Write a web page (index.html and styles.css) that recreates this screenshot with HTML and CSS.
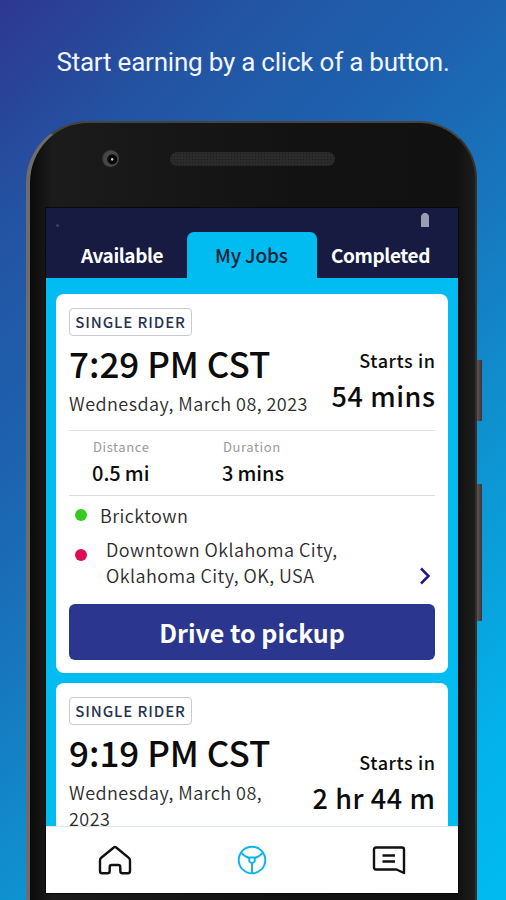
FILE: index.html
```html
<!DOCTYPE html>
<html lang="en">
<head>
    <meta charset="UTF-8">
    <meta name="viewport" content="width=device-width, initial-scale=1.0">
    <title>My Jobs</title>
    <link rel="stylesheet" href="styles.css">
</head>
<body>
    <h1>Start earning by a click of a button.</h1>

    <div class="phone">
        <span class="side-button power"></span>
        <span class="side-button volume"></span>
        <div class="bezel">
            <div class="camera"></div>
            <div class="speaker"></div>
        </div>

        <div class="screen">
            <header>
                <div class="status">
                    <span class="status-dot"></span>
                    <svg class="battery" width="10" height="14" viewBox="0 0 10 14"><path d="M3.500 0h3l2.500 2.500V14H1V2.500z" fill="#9a9cb0"/></svg>
                </div>
                <nav class="tabs">
                    <a class="tab">Available</a>
                    <a class="tab active">My Jobs</a>
                    <a class="tab">Completed</a>
                </nav>
            </header>

            <main>
                <section class="card">
                    <span class="badge">SINGLE RIDER</span>
                    <div class="summary">
                        <div class="when">
                            <h2>7:29 PM CST</h2>
                            <p class="date">Wednesday, March 08, 2023</p>
                        </div>
                        <div class="starts">
                            <p class="starts-label">Starts in</p>
                            <p class="starts-value">54 mins</p>
                        </div>
                    </div>
                    <div class="stats">
                        <div class="stat">
                            <p class="stat-label">Distance</p>
                            <p class="stat-value">0.5<span>mi</span></p>
                        </div>
                        <div class="stat">
                            <p class="stat-label">Duration</p>
                            <p class="stat-value">3<span>mins</span></p>
                        </div>
                    </div>
                    <div class="route">
                        <div class="stop">
                            <span class="dot green"></span>
                            <p>Bricktown</p>
                        </div>
                        <div class="stop dropoff">
                            <span class="dot red"></span>
                            <p>Downtown Oklahoma City,<br>Oklahoma City, OK, USA</p>
                            <svg class="chevron" width="12" height="18" viewBox="0 0 12 18"><path d="M2 1.500l7.500 7.500L2 16.500" fill="none" stroke="#1d1b86" stroke-width="2.500"/></svg>
                        </div>
                    </div>
                    <button>Drive to pickup</button>
                </section>

                <section class="card">
                    <span class="badge">SINGLE RIDER</span>
                    <div class="summary">
                        <div class="when">
                            <h2>9:19 PM CST</h2>
                            <p class="date">Wednesday, March 08,<br>2023</p>
                        </div>
                        <div class="starts late">
                            <p class="starts-label">Starts in</p>
                            <p class="starts-value">2 hr 44 m</p>
                        </div>
                    </div>
                </section>
            </main>

            <footer>
                <svg width="34" height="30" viewBox="0 0 34 30" fill="none" stroke="#111" stroke-width="2.400" stroke-linejoin="round">
                    <path d="M17 2Q16.300 2 15.500 2.700L3.200 12.800Q2 13.800 2 15.500V26Q2 28.300 4.300 28.300H9.500Q11.700 28.300 11.700 26V22Q11.700 20 13.700 20H20.300Q22.300 20 22.300 22V26Q22.300 28.300 24.500 28.300H29.700Q32 28.300 32 26V15.500Q32 13.800 30.800 12.800L18.500 2.700Q17.700 2 17 2Z"/>
                </svg>
                <svg width="30" height="30" viewBox="0 0 30 30" fill="none" stroke="#10b5ef" stroke-width="2">
                    <circle cx="15" cy="15" r="13.300"/>
                    <path d="M12.300 12.500h5.400v4l-2.700 1.800l-2.700-1.800z" stroke-linejoin="round"/>
                    <path d="M12.300 13Q7 11.500 4 7.500M17.700 13Q23 11.500 26 7.500M15 18V28.500"/>
                </svg>
                <svg width="34" height="30" viewBox="0 0 34 30" fill="none" stroke="#111" stroke-width="2.400" stroke-linejoin="round">
                    <path d="M4 2.500H30Q32 2.500 32 4.500V28L24.500 24.500H4Q2 24.500 2 22.500V4.500Q2 2.500 4 2.500ZM10.500 10.500H23M10.500 16.500H23"/>
                </svg>
            </footer>
        </div>
    </div>
</body>
</html>
```
FILE: styles.css
```css
* {
    box-sizing: border-box;
}
body {
    margin: 0;
    height: 900px;
    overflow: hidden;
    background: linear-gradient(136deg, #2e3791 0%, #2354a3 17%, #1d63b0 35%, #1777be 49%, #0f91d0 65%, #03b3eb 88%, #00bbf0 100%);
    font-family: "Noto Sans CJK SC", "Noto Sans", sans-serif;
    color: #0c0c0c;
}
h1, h2, p {
    margin: 0;
    font-weight: 400;
    white-space: nowrap;
}
h1 {
    height: 121px;
    padding-top: 46px;
    font-family: Roboto, sans-serif;
    font-size: 26px;
    line-height: 32px;
    letter-spacing: -0.22px;
    text-align: center;
    color: #f1f5ff;
}
.phone {
    position: relative;
    width: 451px;
    height: 779px;
    margin-left: 26px;
    padding: 0 16px;
    border: 2px solid #45443c;
    border-left: 4px solid #6e6d69;
    border-right-color: #34312a;
    border-bottom: none;
    border-radius: 62px 58px 0 0;
    background: linear-gradient(90deg, #0b0b0b, #1b1b1b 5%, #121212 60%, #111 96%, #1c1c1c);
}
.side-button {
    position: absolute;
    right: -7px;
    width: 5px;
    background: linear-gradient(90deg, #5d5257, #3e3336);
}
.power {
    top: 237px;
    height: 61px;
}
.volume {
    top: 361px;
    height: 137px;
}
.bezel {
    display: flex;
    height: 85px;
    padding: 27px 0 0 56px;
}
.camera {
    width: 17px;
    height: 17px;
    border-radius: 50%;
    background: radial-gradient(circle at 60% 55%, #ccc 0 6%, #080808 12% 32%, #474747 40% 60%, #333 70%);
}
.speaker {
    width: 165px;
    height: 14px;
    margin: 2px 0 0 51px;
    border-radius: 7px;
    background: #2b2b2b radial-gradient(circle, #1c1c1c 0 0.8px, transparent 1px) 0 0 / 3px 3px;
}
.screen {
    display: flex;
    flex-direction: column;
    width: 412px;
    height: 685px;
    background: #00bcf1;
    box-shadow: 0 0 0 1px #090909;
}
header {
    height: 70px;
    background: #171a41;
}
.status {
    display: flex;
    justify-content: space-between;
    height: 24px;
    padding: 5px 28px 0 10px;
}
.status-dot {
    width: 3px;
    height: 3px;
    margin-top: 11px;
    border-radius: 50%;
    background: #3d4063;
}
.tabs {
    display: grid;
    grid-template-columns: 141px 130px 141px;
    height: 46px;
}
.tab {
    padding-left: 35px;
    font-size: 19px;
    font-weight: 700;
    line-height: 46px;
    letter-spacing: -0.4px;
    color: #fff;
}
.tab.active {
    padding-left: 28px;
    border-radius: 7px 7px 0 0;
    background: #00bcf1;
    font-weight: 500;
    letter-spacing: -0.1px;
    color: #0c2138;
}
.tab:last-child {
    padding-left: 14px;
}
main {
    flex: 1;
    overflow: hidden;
    padding: 16px 10px 0;
}
.card {
    height: 379px;
    margin-bottom: 10px;
    padding: 14px 13px 13px;
    border-radius: 8px;
    background: #fff;
}
.badge {
    display: block;
    width: 123px;
    height: 28px;
    border: 1px solid #c6cbd2;
    border-radius: 4px;
    font-size: 15px;
    font-weight: 500;
    line-height: 26px;
    letter-spacing: 0.9px;
    text-align: center;
    color: #253350;
}
.summary {
    display: flex;
    justify-content: space-between;
    height: 94px;
}
h2 {
    font-size: 35px;
    font-weight: 500;
    line-height: 54px;
}
.date {
    font-size: 18px;
    font-weight: 350;
    line-height: 26px;
    letter-spacing: 0.45px;
    color: #2b2b2b;
}
.starts {
    padding-top: 11px;
    text-align: right;
}
.starts.late {
    padding-top: 24px;
}
.starts-label {
    margin-right: -0.6px;
    font-size: 18px;
    font-weight: 500;
    line-height: 26px;
    letter-spacing: 0.6px;
}
.starts-value {
    margin-right: -0.6px;
    font-size: 27px;
    font-weight: 500;
    line-height: 46px;
    letter-spacing: 0.6px;
}
.stats {
    display: flex;
    height: 66px;
    padding: 6px 23px 0 24px;
    border-top: 1px solid #e2e2e2;
    border-bottom: 1px solid #dcdcdc;
}
.stat {
    width: 130px;
}
.stat-label {
    font-size: 13px;
    line-height: 20px;
    letter-spacing: 0.6px;
    color: #999;
}
.stat-value {
    margin-left: -1px;
    font-size: 20px;
    font-weight: 500;
    line-height: 32px;
}
.stat-value span {
    margin-left: 4px;
}
.route {
    height: 108px;
    padding-top: 6px;
    font-size: 18px;
    font-weight: 350;
    line-height: 26px;
    color: #2b2b2b;
}
.route p {
    font-weight: inherit;
    letter-spacing: 0.45px;
}
.stop {
    display: flex;
    padding-left: 6px;
}
.stop p {
    padding-left: 13px;
}
.dropoff {
    margin-top: 8px;
}
.dropoff p {
    flex: 1;
    padding-left: 19px;
}
.dot {
    width: 12px;
    height: 12px;
    margin-top: 7px;
    border-radius: 50%;
}
.green {
    background: #35cb21;
}
.red {
    margin-top: 13px;
    background: #dc0c55;
}
.chevron {
    margin: 31px 4px 0 0;
}
button {
    display: block;
    width: 100%;
    height: 56px;
    padding: 0;
    border: none;
    border-radius: 6px;
    background: #2b378f;
    font-family: inherit;
    font-size: 25px;
    font-weight: 700;
    line-height: 56px;
    color: #fff;
}
footer {
    display: flex;
    align-items: center;
    justify-content: space-between;
    height: 67px;
    padding: 0 52px;
    border-top: 1px solid #dfe5ec;
    background: #fff;
}
```
